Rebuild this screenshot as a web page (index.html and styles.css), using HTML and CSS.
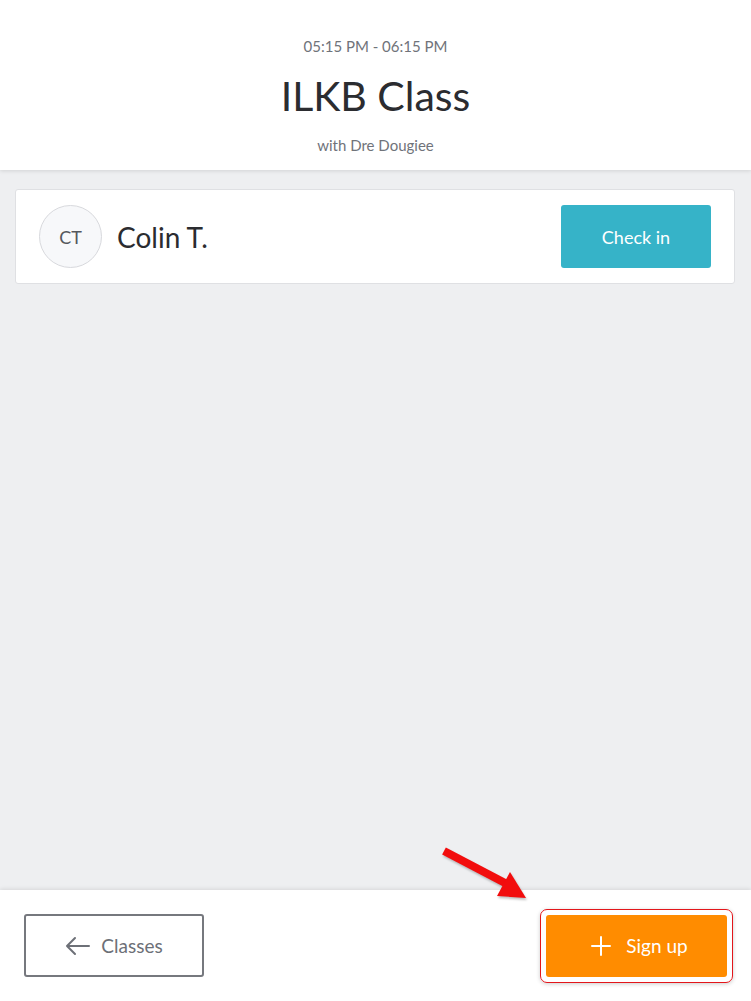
FILE: index.html
```html
<!DOCTYPE html>
<html lang="en">
<head>
  <meta charset="UTF-8">
  <meta name="viewport" content="width=device-width, initial-scale=1.0">
  <title>ILKB Class</title>
  <link rel="stylesheet" href="styles.css">
</head>
<body>
  <div class="page">
    <!-- Class header -->
    <header class="class-header">
      <div class="class-time">05:15 PM - 06:15 PM</div>
      <h1 class="class-title">ILKB Class</h1>
      <div class="class-coach">with Dre Dougiee</div>
    </header>

    <!-- Attendees -->
    <main class="attendees">
      <div class="attendee">
        <div class="avatar">CT</div>
        <div class="attendee-name">Colin T.</div>
        <button class="checkin-button">Check in</button>
      </div>
    </main>

    <!-- Bottom bar -->
    <footer class="bottom-bar">
      <button class="back-button">
        <svg width="26" height="20" viewBox="0 0 26 20" fill="none" stroke="currentColor" stroke-width="2" stroke-linecap="round" stroke-linejoin="round">
          <path d="M24 10H2M10 2L2 10l8 8"/>
        </svg>
        Classes
      </button>
      <div class="signup-highlight">
        <button class="signup-button">
          <svg width="20" height="20" viewBox="0 0 20 20" fill="none" stroke="currentColor" stroke-width="2" stroke-linecap="round">
            <path d="M10 1v18M1 10h18"/>
          </svg>
          Sign up
        </button>
      </div>
      <svg class="pointer-arrow" width="100" height="60" viewBox="0 0 100 60">
        <path d="M4 7L67 40" stroke="#f20d0d" stroke-width="8"/>
        <path d="M70 28L57 52L86 54Z" fill="#f20d0d"/>
      </svg>
    </footer>
  </div>
</body>
</html>
```

FILE: styles.css
```css
/* General Styles */
* {
  box-sizing: border-box;
  margin: 0;
  padding: 0;
}

body {
  font-family: Lato, "Open Sans", sans-serif;
  background-color: #eeeff1;
  color: #2b2c30;
}

.page {
  display: flex;
  flex-direction: column;
  height: 1001px;
  position: relative;
}

/* Header */
.class-header {
  height: 170px;
  background-color: #fff;
  text-align: center;
  padding-top: 36px;
  box-shadow: 0 1px 4px rgba(0, 0, 0, 0.12);
  position: relative;
  z-index: 1;
}

.class-time {
  font-size: 15px;
  color: #70737a;
  line-height: 20px;
}

.class-title {
  font-size: 41px;
  font-weight: 400;
  line-height: 50px;
  margin-top: 15px;
}

.class-coach {
  font-size: 15px;
  color: #70737a;
  line-height: 20px;
  margin-top: 14px;
}

/* Attendee list */
.attendees {
  flex: 1;
  padding: 19px 16px 19px 15px;
}

.attendee {
  display: flex;
  align-items: center;
  background-color: #fff;
  border: 1px solid #dfe0e3;
  border-radius: 3px;
  height: 95px;
  padding: 0 23px;
}

.avatar {
  width: 63px;
  height: 63px;
  border-radius: 50%;
  background-color: #f7f8fa;
  border: 1px solid #d8d9dd;
  display: flex;
  align-items: center;
  justify-content: center;
  font-size: 18px;
  color: #55575d;
}

.attendee-name {
  flex: 1;
  font-size: 28px;
  margin-left: 15px;
}

.checkin-button {
  width: 150px;
  height: 63px;
  background-color: #36b3c8;
  color: #fff;
  border: none;
  border-radius: 3px;
  font-family: inherit;
  font-size: 18px;
}

/* Bottom bar */
.bottom-bar {
  height: 111px;
  background-color: #fff;
  display: flex;
  align-items: center;
  justify-content: space-between;
  padding: 0 18px 0 24px;
  box-shadow: 0 -1px 4px rgba(0, 0, 0, 0.1);
  position: relative;
}

.back-button {
  width: 180px;
  height: 63px;
  background-color: #fff;
  border: 2px solid #76787e;
  border-radius: 3px;
  color: #6d7077;
  font-family: inherit;
  font-size: 19px;
  display: flex;
  align-items: center;
  justify-content: center;
  gap: 10px;
}

.signup-highlight {
  padding: 5px;
  border: 1px solid #e3161b;
  border-radius: 7px;
  box-shadow: 0 1px 4px rgba(0, 0, 0, 0.2);
}

.signup-button {
  width: 181px;
  height: 62px;
  background-color: #ff8c00;
  border: none;
  border-radius: 3px;
  color: #fff;
  font-family: inherit;
  font-size: 19px;
  display: flex;
  align-items: center;
  justify-content: center;
  gap: 15px;
  padding-left: 6px;
}

/* Annotation arrow */
.pointer-arrow {
  position: absolute;
  left: 440px;
  top: -46px;
  filter: drop-shadow(1px 2px 1px rgba(0, 0, 0, 0.25));
}
```
